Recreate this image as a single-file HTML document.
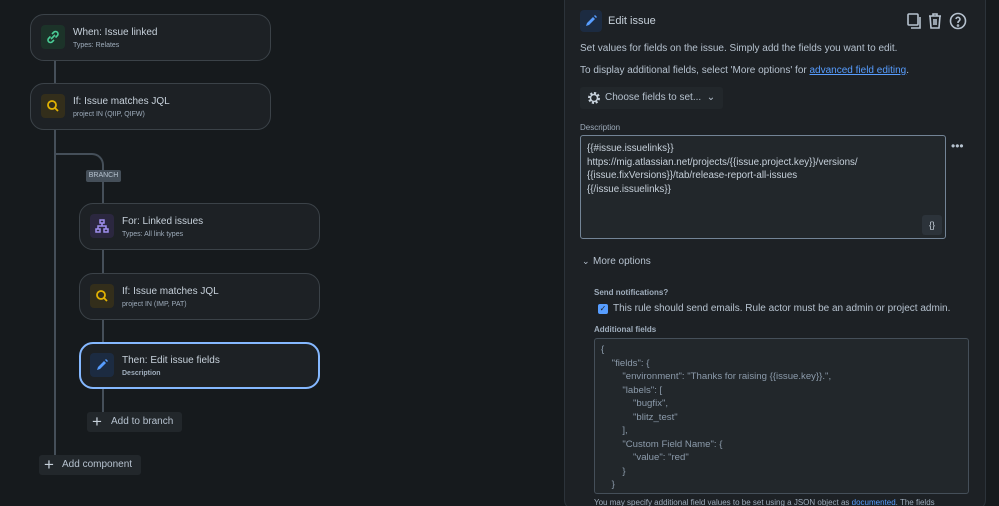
<!DOCTYPE html>
<html style="overflow:hidden;width:999px;height:506px"><head><style>
*{box-sizing:border-box;margin:0;padding:0}
body{width:999px;height:506px;overflow:hidden;background:#161a1d;font-family:"Liberation Sans",sans-serif;color:#c7d1db;position:relative}
.a{position:absolute}
.card{position:absolute;left:30px;width:241px;height:47px;border:1px solid #3b4248;border-radius:14px;background:#1d2125}
.ic{position:absolute;left:10px;top:10px;width:24px;height:24px;border-radius:4px}
.t{position:absolute;left:42px;top:12px;font-size:10px;color:#c7d1db}
.s{position:absolute;left:42px;top:27px;font-size:7px;color:#9fadbc}
.vl{position:absolute;width:2px;background:#454f59}
.btn{position:absolute;background:#22272b;border-radius:3px;font-size:10px;color:#b6c2cf;padding:0 6px;line-height:20px}
.p{position:absolute;font-size:10px;color:#b6c2cf}
</style></head><body>
<div class="vl" style="left:54px;top:61px;height:22px"></div>
<div class="vl" style="left:54px;top:130px;height:325px"></div>
<div class="a" style="left:54px;top:153px;width:50px;height:60px;border-top:2px solid #454f59;border-right:2px solid #454f59;border-top-right-radius:12px"></div>
<div class="vl" style="left:102px;top:249px;height:24px"></div>
<div class="vl" style="left:102px;top:319px;height:23px"></div>
<div class="vl" style="left:102px;top:389px;height:23px"></div>
<div class="a" style="left:86px;top:170px;width:35px;height:12px;background:#454f59;border-radius:2px;font-size:7px;color:#b6c2cf;text-align:center;line-height:12px">BRANCH</div>

<div class="card" style="top:14px"><div class="ic" style="background:#1c3329"><svg width="24" height="24" viewBox="0 0 24 24" fill="none" stroke="#4bce97" stroke-width="1.6"><path d="M11 9l2-2a2.5 2.5 0 013.5 3.5l-2 2M13 15l-2 2a2.5 2.5 0 01-3.5-3.5l2-2M10 14l4-4"/></svg></div><div class="t">When: Issue linked</div><div class="s">Types: Relates</div></div>
<div class="card" style="top:83px"><div class="ic" style="background:#332e1b"><svg width="24" height="24" viewBox="0 0 24 24" fill="none" stroke="#e2b203" stroke-width="1.8"><circle cx="11" cy="11" r="4"/><path d="M14 14l3 3"/></svg></div><div class="t">If: Issue matches JQL</div><div class="s">project IN (QIIP, QIFW)</div></div>
<div class="card" style="top:203px;left:79px"><div class="ic" style="background:#2b273f"><svg width="24" height="24" viewBox="0 0 24 24" fill="none" stroke="#9f8fef" stroke-width="1.5"><rect x="10" y="6" width="4" height="3"/><rect x="6" y="15" width="4" height="3"/><rect x="14" y="15" width="4" height="3"/><path d="M12 9v3M8 15v-3h8v3"/></svg></div><div class="t">For: Linked issues</div><div class="s">Types: All link types</div></div>
<div class="card" style="top:273px;left:79px"><div class="ic" style="background:#332e1b"><svg width="24" height="24" viewBox="0 0 24 24" fill="none" stroke="#e2b203" stroke-width="1.8"><circle cx="11" cy="11" r="4"/><path d="M14 14l3 3"/></svg></div><div class="t">If: Issue matches JQL</div><div class="s">project IN (IMP, PAT)</div></div>
<div class="card" style="top:342px;left:79px;border:2px solid #85b8ff"><div class="ic" style="background:#1c2b41;left:9px;top:9px"><svg width="24" height="24" viewBox="0 0 24 24"><path d="M7 17l1-3 6-6 2 2-6 6z M15 7l1-1 2 2-1 1z" fill="#579dff"/></svg></div><div class="t" style="left:41px;top:11px">Then: Edit issue fields</div><div class="s" style="left:41px;top:26px;font-weight:bold">Description</div></div>
<div class="btn" style="left:87px;top:412px;width:95px;padding-left:24px">Add to branch</div><div class="a" style="left:92px;top:413px;font-size:17px;color:#c7d1db;line-height:17px">+</div>
<div class="btn" style="left:39px;top:455px;width:102px;padding-left:23px">Add component</div><div class="a" style="left:44px;top:456px;font-size:17px;color:#c7d1db;line-height:17px">+</div>

<div class="a" style="left:564px;top:-10px;width:422px;height:520px;background:#1d2125;border:1px solid #2c333a;border-radius:10px"></div>
<div class="a" style="left:580px;top:10px;width:22px;height:22px;background:#1c2b41;border-radius:4px"><svg width="22" height="22" viewBox="0 0 22 22"><path d="M6 16l1-3 6-6 2 2-6 6z M14 6l1-1 2 2-1 1z" fill="#579dff"/></svg></div>
<div class="p" style="left:608px;top:15px;font-size:11px;color:#c7d1db">Edit issue</div>
<svg class="a" style="left:906px;top:11px" width="62" height="20" viewBox="0 0 62 20" fill="none" stroke="#b6c2cf" stroke-width="1.6"><rect x="2" y="3" width="10" height="11" rx="1"/><path d="M5 17h9V6"/><path d="M23 5h12M27 5V3h4v2M24 5l1 12h8l1-12M28 8v6M30 8v6"/><circle cx="52" cy="10" r="7.5"/><path d="M50 8a2 2 0 113 2c-1 .5-1 1-1 2"/><circle cx="52" cy="14.5" r=".5"/></svg>
<div class="p" style="left:580px;top:43px">Set values for fields on the issue. Simply add the fields you want to edit.</div>
<div class="p" style="left:580px;top:65px">To display additional fields, select 'More options' for <span style="color:#579dff;text-decoration:underline">advanced field editing</span>.</div>
<div class="btn" style="left:580px;top:87px;width:143px;height:22px;line-height:22px;padding-left:25px">Choose fields to set... &nbsp;⌄</div>
<svg class="a" style="left:587px;top:91px" width="14" height="14" viewBox="0 0 14 14"><circle cx="7" cy="7" r="4.5" fill="none" stroke="#c7d1db" stroke-width="3" stroke-dasharray="2 1.5"/><circle cx="7" cy="7" r="3.5" fill="none" stroke="#c7d1db" stroke-width="1.5"/></svg>
<div class="p" style="left:580px;top:123px;font-size:8px;color:#9fadbc">Description</div>
<div class="a" style="left:580px;top:135px;width:366px;height:104px;border:1px solid #738496;border-radius:3px;background:#22272b;padding:6px 6px;font-size:9.8px;line-height:13.5px;color:#c7d1db">{{#issue.issuelinks}}<br>https://mig.atlassian.net/projects/{{issue.project.key}}/versions/<br>{{issue.fixVersions}}/tab/release-report-all-issues<br>{{/issue.issuelinks}}</div>
<div class="a" style="left:922px;top:215px;width:20px;height:20px;background:#2c333a;border-radius:3px;font-size:9px;text-align:center;line-height:20px;color:#c7d1db">{}</div>
<div class="a" style="left:951px;top:139px;font-size:12px;color:#b6c2cf;letter-spacing:0">•••</div>
<div class="p" style="left:582px;top:256px;font-size:9px">⌄</div>
<div class="p" style="left:593px;top:256px">More options</div>
<div class="p" style="left:594px;top:288px;font-size:8px;color:#9fadbc;font-weight:bold">Send notifications?</div>
<div class="a" style="left:598px;top:304px;width:10px;height:10px;background:#579dff;border-radius:2px;font-size:8px;line-height:10px;text-align:center;color:#1d2125">✓</div>
<div class="p" style="left:613px;top:303px">This rule should send emails. Rule actor must be an admin or project admin.</div>
<div class="p" style="left:594px;top:325px;font-size:8px;color:#9fadbc;font-weight:bold">Additional fields</div>
<div class="a" style="left:594px;top:338px;width:375px;height:156px;border:1px solid #454f59;border-radius:3px;background:#22272b;padding:4px 6px;font-size:9.6px;line-height:13.5px;color:#8c9bab;white-space:pre">{
    "fields": {
        "environment": "Thanks for raising {{issue.key}}.",
        "labels": [
            "bugfix",
            "blitz_test"
        ],
        "Custom Field Name": {
            "value": "red"
        }
    }</div>
<div class="p" style="left:594px;top:498px;font-size:8px;color:#9fadbc">You may specify additional field values to be set using a JSON object as <span style="color:#579dff">documented</span>. The fields</div>
</body></html>
